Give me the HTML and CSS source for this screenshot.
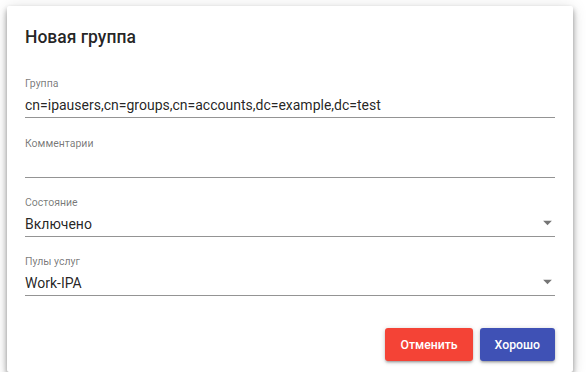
FILE: index.html
```html
<!DOCTYPE html>
<html lang="ru">
<head>
  <meta charset="UTF-8">
  <meta name="viewport" content="width=device-width, initial-scale=1.0">
  <title>Новая группа</title>
  <link rel="stylesheet" href="styles.css">
</head>
<body>
  <div class="dialog">
    <h2 class="dialog-title">Новая группа</h2>
    <form class="dialog-form">
      <div class="field">
        <label class="field-label">Группа</label>
        <div class="field-input">cn=ipausers,cn=groups,cn=accounts,dc=example,dc=test</div>
      </div>
      <div class="field field-comments">
        <label class="field-label">Комментарии</label>
        <div class="field-input"></div>
      </div>
      <div class="field">
        <label class="field-label">Состояние</label>
        <div class="field-input field-select">
          Включено
          <svg class="select-arrow" viewBox="0 0 24 24" width="21" height="21"><path d="M7 10l5 5 5-5z"/></svg>
        </div>
      </div>
      <div class="field">
        <label class="field-label">Пулы услуг</label>
        <div class="field-input field-select">
          Work-IPA
          <svg class="select-arrow" viewBox="0 0 24 24" width="21" height="21"><path d="M7 10l5 5 5-5z"/></svg>
        </div>
      </div>
    </form>
    <div class="dialog-actions">
      <button type="button" class="btn btn-cancel">Отменить</button>
      <button type="button" class="btn btn-ok">Хорошо</button>
    </div>
  </div>
</body>
</html>
```

FILE: styles.css
```css
body {
  margin: 0;
  padding: 6px 0 0 7px;
  background-color: #fff;
  font-family: Roboto, "Noto Sans", sans-serif;
}
.dialog {
  width: 566px;
  height: 366px;
  box-sizing: border-box;
  padding: 21px 18px 11px 18px;
  background: #fff;
  border-radius: 2px;
  box-shadow: 0 3px 5px rgba(0, 0, 0, 0.3), 0 6px 10px rgba(0, 0, 0, 0.14), 0 1px 16px rgba(0, 0, 0, 0.12);
  display: flex;
  flex-direction: column;
}
.dialog-title {
  margin: 0;
  font-size: 17.5px;
  line-height: 21px;
  font-weight: 500;
  color: rgba(0, 0, 0, 0.87);
}
.dialog-form {
  margin-top: 29px;
  display: flex;
  flex-direction: column;
  gap: 18px;
}
.field {
  display: flex;
  flex-direction: column;
}
.field-comments {
  margin-top: 1px;
}
.field-label {
  font-size: 10.5px;
  line-height: 13px;
  color: rgba(0, 0, 0, 0.54);
}
.field-input {
  position: relative;
  padding: 7px 0 3px;
  height: 17px;
  font-size: 14px;
  line-height: 17px;
  color: rgba(0, 0, 0, 0.87);
  border-bottom: 1px solid rgba(0, 0, 0, 0.42);
  white-space: nowrap;
}
.select-arrow {
  position: absolute;
  right: -3px;
  top: calc(50% - 11px);
  fill: rgba(0, 0, 0, 0.54);
}
.dialog-actions {
  margin-top: auto;
  display: flex;
  justify-content: flex-end;
  gap: 7px;
}
.btn {
  height: 33px;
  padding: 0 15px;
  border: none;
  border-radius: 3px;
  font-family: Roboto, "Noto Sans", sans-serif;
  font-size: 12.25px;
  font-weight: 500;
  color: #fff;
  cursor: pointer;
  box-shadow: 0 1px 5px rgba(0, 0, 0, 0.2), 0 2px 2px rgba(0, 0, 0, 0.14), 0 3px 1px -2px rgba(0, 0, 0, 0.12);
}
.btn-cancel {
  background-color: #f44336;
}
.btn-ok {
  background-color: #3f51b5;
}
```
